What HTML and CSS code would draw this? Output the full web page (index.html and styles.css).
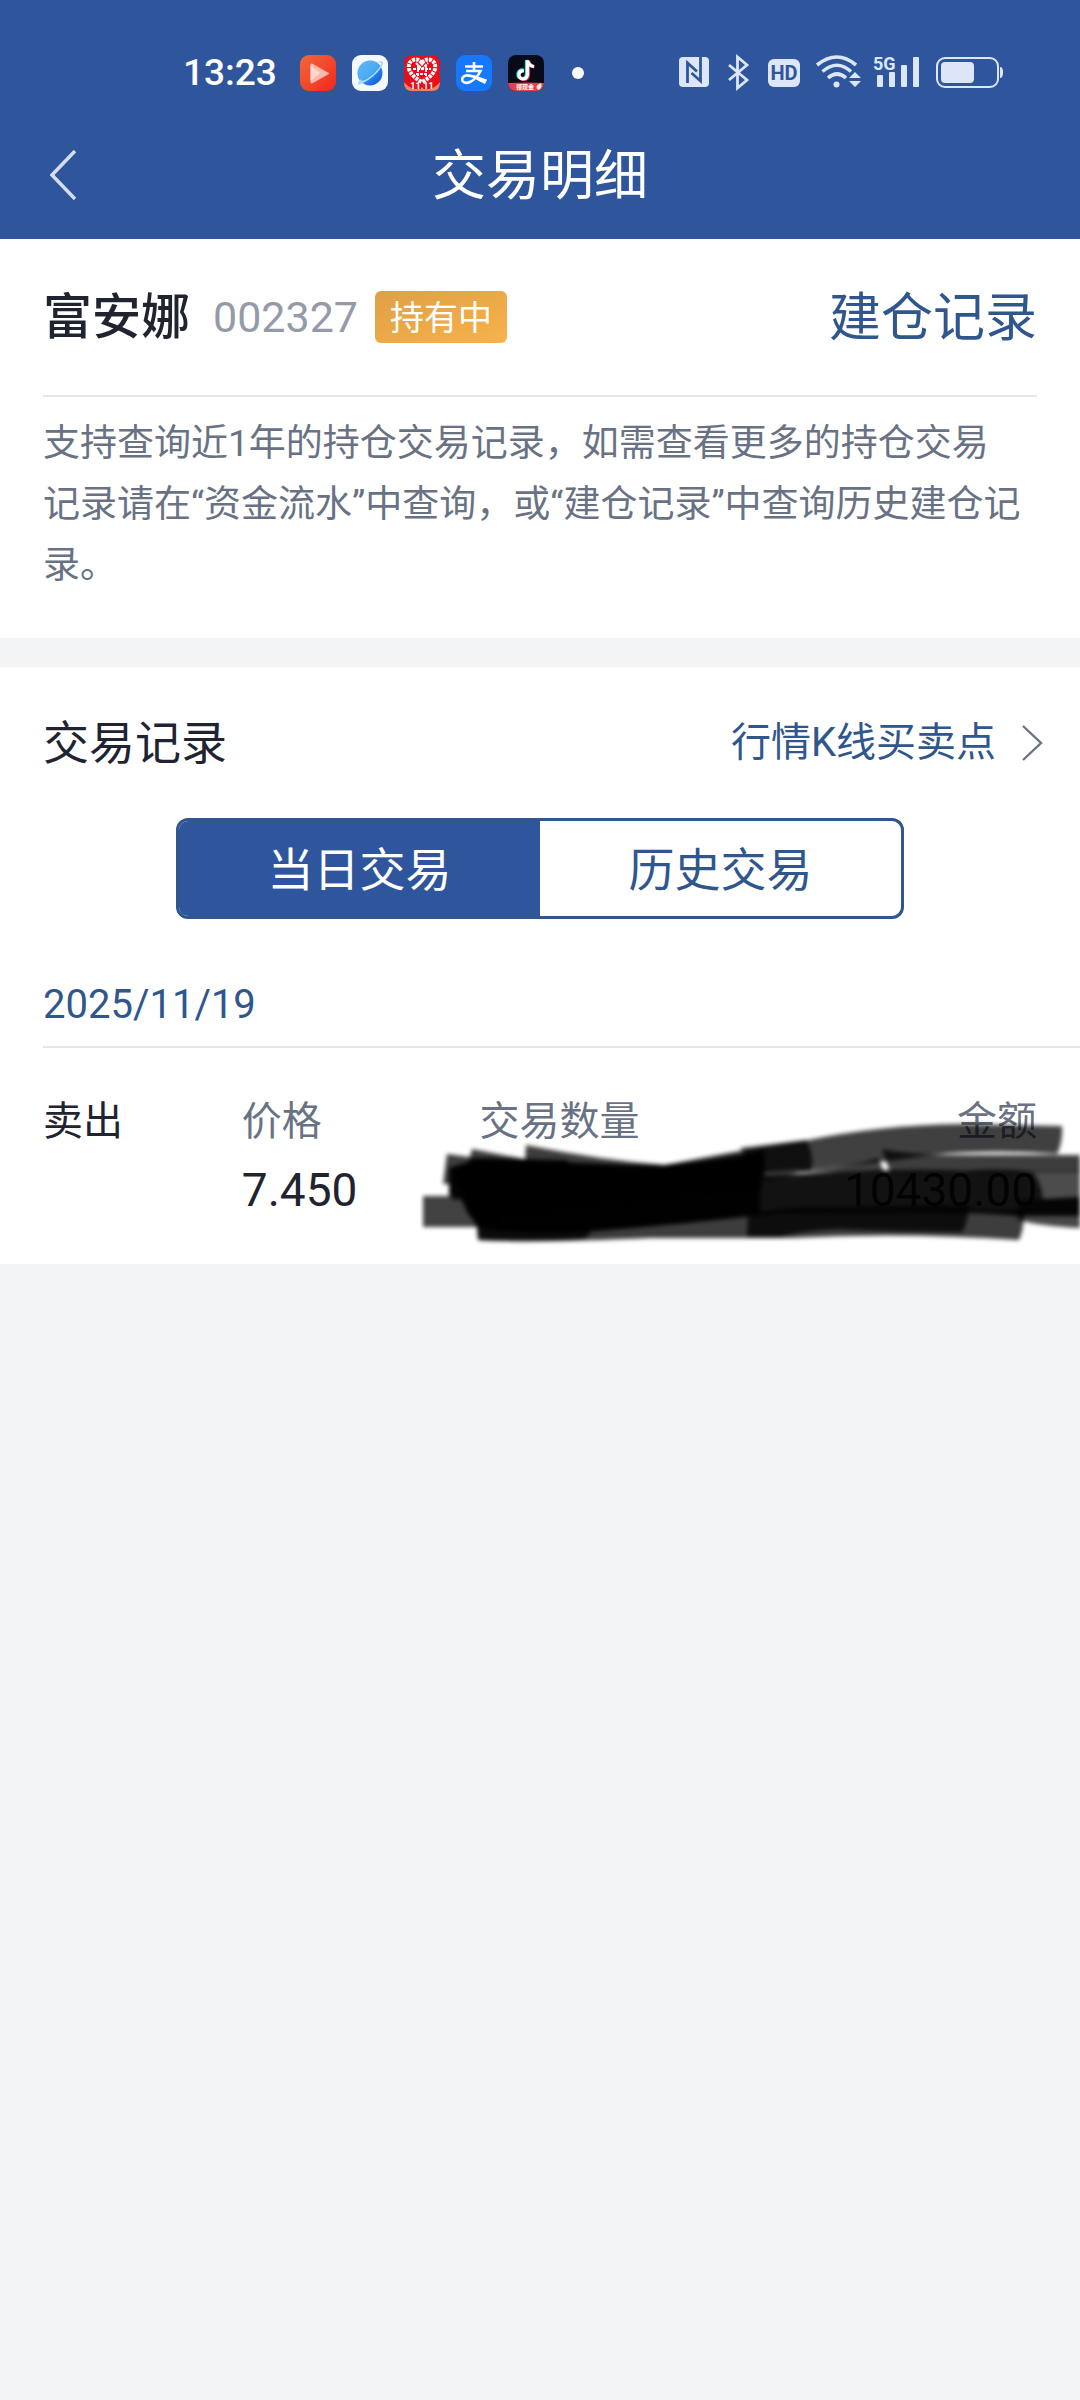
FILE: index.html
```html
<!DOCTYPE html>
<html lang="zh-CN">
<head>
<meta charset="utf-8">
<meta name="viewport" content="width=device-width">
<title>交易明细</title>
<link rel="stylesheet" href="styles.css">
</head>
<body>
<header class="header">
  <div class="status">
    <span class="clock">13:23</span>
    <div class="apps">
      <svg class="app" viewBox="0 0 36 36"><defs><linearGradient id="v" x1="0" y1="0" x2="1" y2="1"><stop offset="0" stop-color="#f06a3a"/><stop offset="1" stop-color="#f2261c"/></linearGradient></defs><rect width="36" height="36" rx="9" fill="url(#v)"/><path d="M12 8.500L28 17.500Q30 18.500 28 19.500L12 28.500Q10.500 29 10.500 27V10Q10.500 8 12 8.500Z" fill="#ffb9ac"/><path d="M10.500 10.500L20 18L10.500 26Z" fill="#ffd8d0"/></svg>
      <svg class="app" viewBox="0 0 36 36"><defs><linearGradient id="b" x1="0" y1="0" x2="1" y2="1"><stop offset="0" stop-color="#6cc6fb"/><stop offset=".5" stop-color="#338cf0"/><stop offset="1" stop-color="#0b54d0"/></linearGradient></defs><rect width="36" height="36" rx="9" fill="#f5f9ff"/><circle cx="18" cy="18" r="12.500" fill="url(#b)"/><path d="M29 6Q33 6 29.500 12Q23 22 11 28Q6 31 6 28.500Q6 26 9 23Q8 28 16 23Q25 17 29 9Q29.500 6.500 26 8Q27 6 29 6Z" fill="#a5dcfb"/><path d="M8 25Q6 20 6.500 16Q8 9 14 6.500Q22 4 27 10Q26 15 18 21Q11 26 8 25Z" fill="#58b6f8" opacity=".7"/></svg>
      <svg class="app" viewBox="0 0 36 36"><rect width="36" height="36" rx="8" fill="#e60f1b"/><path d="M0 27Q5 33 11 34H25Q31 33 36 27Q36 36 28 36H8Q0 36 0 27Z" fill="#ef8258"/><path d="M18 8Q22 3 27 5Q32 7 31 14Q29 21 18 27Q7 21 5 14Q4 7 9 5Q14 3 18 8Z" fill="none" stroke="#fff" stroke-width="4" stroke-dasharray="3 1"/><path d="M12 8L18 14L24 8M9 14H27M12 19H24M14 10V21M22 10V21" fill="none" stroke="#fff" stroke-width="2" stroke-dasharray="3 1"/><text x="18" y="34" class="tiny-label">11.11</text></svg>
      <svg class="app" viewBox="0 0 36 36"><rect width="36" height="36" rx="9" fill="#1677ff"/><path d="M9 11.500H27M18 7V16M10 16H24.500Q21 23 15 26.500Q9 29.500 6.500 26Q5 22 10 20.500Q15 19.500 30 26.500" fill="none" stroke="#fff" stroke-width="2.600"/><path d="M18 20.500L31 24.500L29 29Q22 26 18 23Z" fill="#fff"/></svg>
      <svg class="app" viewBox="0 0 36 36"><defs><clipPath id="d"><rect width="36" height="36" rx="8"/></clipPath></defs><g clip-path="url(#d)"><rect width="36" height="36" fill="#070b18"/><g fill="none" stroke-width="3.200"><path d="M18.500 5V19Q18.500 23.500 14 23.500Q9.500 23 10 18.500Q11 14.500 15.500 15M18.500 5Q20 10.500 25 11" stroke="#35dfe0"/><path d="M20.500 6V20Q20 24.500 15.500 24.500Q11 24 11.500 19.500M20.500 6Q22 11 26.500 12" stroke="#ee2d55"/><path d="M19.500 5.500V19.500Q19 24 14.500 24Q10.500 23 11 19Q12 15.500 16 16M19.500 5.500Q21 11 26 11.500" stroke="#fff"/></g><path d="M0 28Q18 27 36 28V36H0Z" fill="#e53f50"/><text x="17" y="34" class="promo-label">领现金</text><path d="M29 34Q27 30 33 28Q35 32 31 35Z" fill="#ffe7dc"/></g></svg>
      <i class="dot"></i>
    </div>
    <svg class="signals" viewBox="0 -6 330 48" fill="#dce6f8">
      <rect y="2" width="30" height="30" rx="4"/><path d="M8.500 28V8L18 16.500M21.500 2V26L12.500 18" fill="none" stroke="#2f569d" stroke-width="2.800"/>
      <path d="M50 10L68 25L58.500 33V2L68 10L50 25" fill="none" stroke="#dce6f8" stroke-width="2.800"/>
      <rect x="89" y="4" width="32" height="28" rx="6"/><text x="105" y="25" class="hd-label">HD</text>
      <g fill="none" stroke="#dce6f8" stroke-width="3.600"><path d="M138 10Q158 -6 177 10M143.500 16.500Q158 4 172 16.500M149 23Q158 15 167 23"/></g><circle cx="157.500" cy="29.500" r="3"/><path d="M170 23L176 17L182 23ZM170 26L176 32L182 26Z"/>
      <rect x="198" y="20" width="6" height="12" rx="1"/><rect x="210" y="17" width="6" height="15" rx="1"/><rect x="222" y="10" width="6" height="22" rx="1"/><rect x="234" y="2" width="6" height="30" rx="1"/><text x="194" y="15" class="net-label">5G</text>
      <rect x="258" y="3" width="61" height="29" rx="8" fill="none" stroke="#dce6f8" stroke-width="2"/><rect x="262" y="7" width="33" height="21" rx="4"/><path d="M321 12Q324 12 324 17Q324 23 321 23Z"/>
    </svg>
  </div>
  <div class="titlebar">
    <button class="back" aria-label="返回"><svg viewBox="0 0 26 50"><path d="M25 1L2 25L25 49" fill="none" stroke="#d5ddf0" stroke-width="3.500"/></svg></button>
    <h1 class="title">交易明细</h1>
  </div>
</header>
<main>
  <section class="card stock">
    <div class="stock-row">
      <h2 class="name">富安娜</h2>
      <span class="code">002327</span>
      <span class="badge">持有中</span>
      <a class="build" href="#build">建仓记录</a>
    </div>
    <p class="note">支持查询近1年的持仓交易记录，如需查看更多的持仓交易记录请在“资金流水”中查询，或“建仓记录”中查询历史建仓记录。</p>
  </section>
  <section class="card records">
    <div class="records-row">
      <h2 class="heading">交易记录</h2>
      <a class="market" href="#market">行情K线买卖点<svg viewBox="0 0 21 36"><path d="M1 1L19 18L1 35" fill="none" stroke="#6b7384" stroke-width="2.400"/></svg></a>
    </div>
    <div class="tabs">
      <button class="tab active">当日交易</button>
      <button class="tab">历史交易</button>
    </div>
    <h3 class="date">2025/11/19</h3>
    <div class="trade">
      <table class="table">
        <thead><tr><th class="side">卖出</th><th>价格</th><th class="right">交易数量</th><th class="right">金额</th></tr></thead>
        <tbody><tr><td></td><td>7.450</td><td class="right">1400</td><td class="right">10430.00</td></tr></tbody>
      </table>
      <svg class="scribble" viewBox="420 1110 660 140">
        <defs><filter id="soft" x="-5%" y="-10%" width="110%" height="120%"><feGaussianBlur stdDeviation="2.200"/></filter></defs>
        <g filter="url(#soft)">
          <path opacity=".74" d="M423 1196H500V1227H423Z"/>
          <path opacity=".76" d="M447 1154L520 1164V1200H452L450 1184H443Z"/>
          <path opacity=".76" d="M472 1149L550 1164V1215H468L470 1196L465 1176Z"/>
          <path opacity=".76" d="M526 1145Q600 1160 665 1165Q710 1160 765 1149L762 1190L560 1210L524 1175Z"/>
          <path opacity=".93" d="M449 1168L480 1158L567 1160L570 1165H665Q720 1163 762 1152Q767 1163 764 1176L800 1174Q900 1168 965 1171Q1000 1168 1034 1172Q1041 1185 1043 1199L1080 1197V1216H1018Q960 1210 780 1213Q690 1224 587 1232Q530 1236 478 1228L466 1210L460 1196L449 1196Z"/>
          <path opacity=".9" d="M452 1168L480 1160L567 1162L665 1167L760 1155V1212Q690 1222 587 1230Q530 1234 480 1226L466 1206Z"/>
          <path opacity=".75" d="M665 1165Q745 1149 803 1141Q880 1125 960 1124L1062 1126Q1063 1142 1057 1154Q990 1149 930 1155Q860 1166 800 1170L670 1178Z"/>
          <path opacity=".75" d="M740 1148L806 1140Q815 1155 811 1170L765 1180Z"/>
          <path opacity=".76" d="M882 1149Q910 1155 960 1155H1080V1172H1035L890 1172Z"/>
          <path opacity=".7" d="M1034 1171H1080V1200H1043Z"/>
          <path opacity=".75" d="M800 1170Q850 1168 878 1158L884 1172H800Z"/>
          <path opacity=".76" d="M477 1224L590 1225L800 1210H1024Q1024 1230 1019 1240Q900 1232 790 1238H650Q540 1243 478 1240Z"/>
          <path opacity=".8" d="M477 1226L590 1225Q593 1234 584 1239Q530 1243 478 1240Z"/>
          <path opacity=".78" d="M748 1213L800 1207L969 1205Q968 1223 962 1232Q890 1232 840 1229Q800 1231 780 1237H747Z"/>
          <path opacity=".72" d="M1018 1200L1080 1198V1228Q1040 1226 1018 1220Z"/>
        </g>
      </svg>
    </div>
  </section>
</main>
</body>
</html>
```
FILE: styles.css
```css
* { box-sizing: border-box; }
body {
  margin: 0;
  background: #f3f4f6;
  color: #1f2430;
  font-family: Roboto, "Noto Sans CJK SC", sans-serif;
}
h1, h2, h3, p { margin: 0; font-weight: 400; }
a { color: #30568e; text-decoration: none; }
button { border: 0; padding: 0; font: inherit; background: none; }
svg { display: block; }

.header { background: #2f569d; color: #fff; }
.status { display: flex; align-items: center; height: 110px; padding: 36px 71px 0 183px; }
.clock { font-size: 37px; font-weight: 500; line-height: 42px; }
.apps { display: flex; align-items: center; gap: 16px; margin-left: 23px; }
.app { width: 36px; height: 36px; }
.dot { width: 12px; height: 12px; margin-left: 12px; border-radius: 50%; background: #fff; }
.signals { width: 330px; height: 48px; margin-left: auto; }
.tiny-label { font-size: 9px; font-weight: 700; fill: #fff; text-anchor: middle; }
.promo-label { font-size: 6px; font-weight: 700; fill: #fff; text-anchor: middle; }
.hd-label { font-size: 20px; font-weight: 700; fill: #2f569d; text-anchor: middle; }
.net-label { font-size: 18px; font-weight: 700; stroke: #2f569d; stroke-width: 3px; paint-order: stroke; }

.titlebar { display: grid; grid-template-columns: 1fr auto 1fr; align-items: center; height: 129px; padding: 0 44px; }
.back { width: 40px; height: 50px; padding: 0 6px; }
.back svg { width: 26px; height: 50px; }
.title { padding-top: 4px; font-size: 54px; line-height: 64px; }

.card { background: #fff; }
.stock { padding: 0 43px 42px; }
.stock-row { display: flex; align-items: center; height: 158px; border-bottom: 2px solid #e5e6e8; }
.name { padding-top: 2px; font-size: 49px; font-weight: 500; line-height: 56px; }
.code { margin-left: 23px; font-size: 43px; color: #949aa8; }
.badge { display: flex; align-items: center; height: 52px; margin-left: 17px; padding: 0 15px 4px; border-radius: 6px; background: linear-gradient(160deg, #dfa045, #f7b24a); color: #fff; font-size: 34px; }
.build { margin-left: auto; padding-top: 4px; font-size: 52px; line-height: 60px; }
.note { padding: 16px 14px 0 0; font-size: 37px; line-height: 61px; color: #697284; }

.records { margin-top: 29px; }
.records-row { display: flex; align-items: center; justify-content: space-between; height: 151px; padding: 0 37px 0 43px; }
.heading { font-size: 46px; line-height: 54px; }
.market { display: flex; align-items: center; gap: 26px; font-size: 40px; line-height: 48px; }
.market svg { width: 21px; height: 36px; }
.tabs { display: grid; grid-template-columns: 1fr 1fr; height: 101px; margin: 0 176px; border: 3px solid #30568e; border-radius: 12px; overflow: hidden; }
.tab { padding-top: 2px; color: #30568e; font-size: 46px; line-height: 54px; }
.tab.active { background: #2f569d; color: #fff; }
.date { margin-left: 43px; padding-top: 45px; border-bottom: 2px solid #e5e6e8; color: #30568e; font-size: 40px; line-height: 82px; }

.trade { position: relative; padding: 40px 43px 40px; }
.table { width: 100%; table-layout: fixed; border-collapse: collapse; }
.table th, .table td { width: 20%; height: 68px; padding: 0; text-align: left; font-weight: 400; line-height: 54px; }
.table th { color: #697284; font-size: 40px; }
.table td { font-size: 46px; }
.table th:last-child { width: 40%; }
.table .side { color: #1f2430; }
.table .right { text-align: right; }
.scribble { position: absolute; right: 0; bottom: 14px; width: 660px; height: 140px; }
```
